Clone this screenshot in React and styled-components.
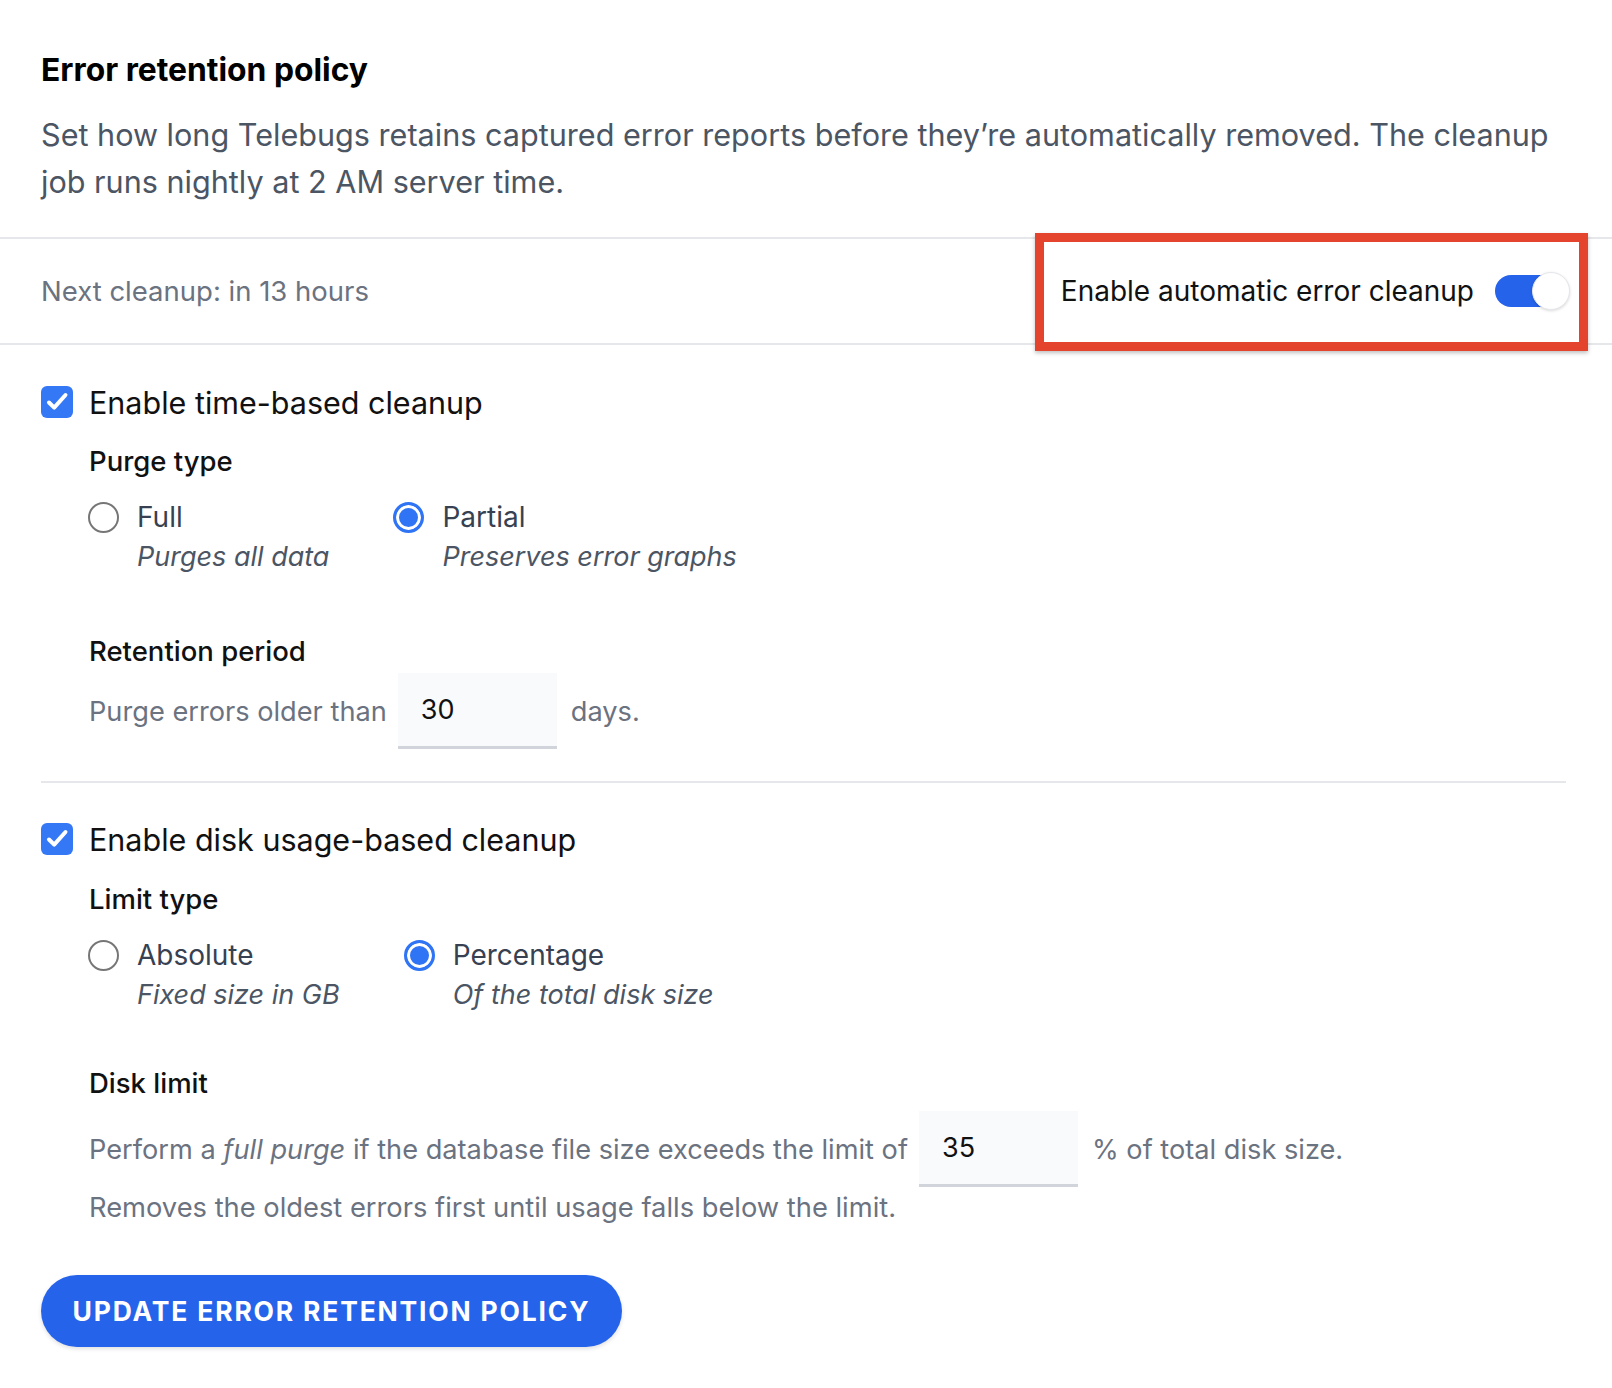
import React from 'react'
import styled, { createGlobalStyle } from 'styled-components'

const GlobalStyle = createGlobalStyle`
  body {
    margin: 0;
    background: #ffffff;
    font-family: Inter, "Noto Sans", "Liberation Sans", sans-serif;
    color: #111827;
  }
`

const Page = styled.div`
  width: 1612px;
  min-height: 1388px;
  box-sizing: border-box;
`

const Header = styled.header`
  padding: 50px 46px 32px 41px;
`

const Title = styled.h2`
  margin: 0;
  font-size: 31.8px;
  line-height: 40px;
  font-weight: 700;
  color: #000;
`

const Description = styled.p`
  margin: 21px 0 0;
  font-size: 30.6px;
  line-height: 47px;
  color: #4b5563;
`

const StatusBar = styled.div`
  height: 104px;
  border-top: 2px solid #e5e7eb;
  border-bottom: 2px solid #e5e7eb;
  padding: 0 47px 0 41px;
  display: flex;
  align-items: center;
  justify-content: space-between;
`

const NextCleanup = styled.span`
  font-size: 27.5px;
  color: #6b7280;
`

const ToggleGroup = styled.label`
  position: relative;
  display: flex;
  align-items: center;
  gap: 21px;
  font-size: 28px;
  color: #111;

  &::before {
    content: '';
    position: absolute;
    top: -41px;
    bottom: -43px;
    left: -26px;
    right: -23px;
    border: 9px solid #e4442e;
    box-shadow: 0 2px 4px rgba(0, 0, 0, 0.25);
    pointer-events: none;
  }
`

const Track = styled.span`
  position: relative;
  display: block;
  width: 70px;
  height: 32px;
  border-radius: 16px;
  background: ${p => (p.on ? '#2563eb' : '#d1d5db')};
`

const Knob = styled.span`
  position: absolute;
  top: -3px;
  ${p => (p.on ? 'right: -5px;' : 'left: -5px;')}
  width: 38px;
  height: 38px;
  border-radius: 50%;
  background: #fff;
  border: 1px solid #e5e7eb;
  box-sizing: border-box;
  box-shadow: 0 1px 3px rgba(0, 0, 0, 0.15);
`

const Body = styled.div`
  padding: 37px 46px 0 41px;
`

const CheckRow = styled.label`
  display: flex;
  align-items: center;
  gap: 16px;
  height: 40px;
  font-size: 30.5px;
  color: #111;
`

const CheckBox = styled.span`
  width: 32px;
  height: 32px;
  border-radius: 6px;
  background: #3578f6;
  display: flex;
  align-items: center;
  justify-content: center;
`

const Indent = styled.div`
  padding-left: 48px;
`

const FieldLabel = styled.div`
  margin-top: ${p => p.top}px;
  font-size: 27.5px;
  line-height: 36px;
  font-weight: 500;
  color: #111;
`

const RadioGroup = styled.div`
  display: flex;
  gap: 64px;
  margin-top: 20px;
  margin-left: -1px;
`

const RadioOption = styled.label`
  display: grid;
  grid-template-columns: 31px auto;
  column-gap: 18px;
  row-gap: 4px;
  align-items: center;
`

const RadioCircle = styled.span`
  width: 31px;
  height: 31px;
  box-sizing: border-box;
  border-radius: 50%;
  border: ${p => (p.checked ? '3px solid #2f74f5' : '2px solid #767676')};
  background: ${p => (p.checked ? '#2f74f5' : '#fff')};
  box-shadow: ${p => (p.checked ? 'inset 0 0 0 3px #fff' : 'none')};
`

const RadioText = styled.span`
  font-size: 28px;
  line-height: 36px;
  color: #374151;
`

const Hint = styled.span`
  grid-column: 2;
  font-size: 27px;
  line-height: 36px;
  font-style: italic;
  color: #4b5563;
`

const InputRow = styled.div`
  display: flex;
  align-items: center;
  margin-top: ${p => p.top}px;
  font-size: 27.2px;
  color: #6b7280;
`

const NumberInput = styled.input`
  width: 159px;
  height: 76px;
  box-sizing: border-box;
  margin: 0 14px 0 11px;
  padding: 0 0 0 23px;
  border: none;
  border-bottom: 3px solid #d1d5db;
  background: #f9fafb;
  font-family: inherit;
  font-size: 27px;
  color: #111;
  outline: none;
`

const Note = styled.p`
  margin: 3px 0 0;
  font-size: 27.3px;
  line-height: 36px;
  color: #6b7280;
`

const Divider = styled.hr`
  margin: 32px 0 36px;
  border: none;
  border-top: 2px solid #e5e7eb;
`

const SubmitButton = styled.button`
  margin-top: 49px;
  width: 581px;
  height: 72px;
  border: none;
  border-radius: 36px;
  background: #2563eb;
  color: #fff;
  font-family: inherit;
  font-size: 26.5px;
  font-weight: 700;
  letter-spacing: 1.8px;
  box-shadow: 0 2px 4px rgba(0, 0, 0, 0.12);
  cursor: pointer;
`

const Check = () => (
  <CheckBox>
    <svg width="24" height="24" viewBox="0 0 24 24" fill="none">
      <path d="M4 12.5l5.2 5.2L20.5 5" stroke="#fff" strokeWidth="4" strokeLinecap="round" strokeLinejoin="round" />
    </svg>
  </CheckBox>
)

const Radio = ({ checked, label, hint }) => (
  <RadioOption>
    <RadioCircle checked={checked} />
    <RadioText>{label}</RadioText>
    <Hint>{hint}</Hint>
  </RadioOption>
)

const App = () => {
  return (
    <Page>
      <GlobalStyle />
      <Header>
        <Title>Error retention policy</Title>
        <Description>
          Set how long Telebugs retains captured error reports before they’re automatically removed. The cleanup job runs nightly at 2 AM server time.
        </Description>
      </Header>

      <StatusBar>
        <NextCleanup>Next cleanup: in 13 hours</NextCleanup>
        <ToggleGroup>
          Enable automatic error cleanup
          <Track on>
            <Knob on />
          </Track>
        </ToggleGroup>
      </StatusBar>

      <Body>
        <CheckRow>
          <Check />
          Enable time-based cleanup
        </CheckRow>
        <Indent>
          <FieldLabel top={21}>Purge type</FieldLabel>
          <RadioGroup>
            <Radio label="Full" hint="Purges all data" />
            <Radio checked label="Partial" hint="Preserves error graphs" />
          </RadioGroup>
          <FieldLabel top={58}>Retention period</FieldLabel>
          <InputRow top={4}>
            Purge errors older than
            <NumberInput defaultValue="30" />
            days.
          </InputRow>
        </Indent>

        <Divider />

        <CheckRow>
          <Check />
          Enable disk usage-based cleanup
        </CheckRow>
        <Indent>
          <FieldLabel top={22}>Limit type</FieldLabel>
          <RadioGroup>
            <Radio label="Absolute" hint="Fixed size in GB" />
            <Radio checked label="Percentage" hint="Of the total disk size" />
          </RadioGroup>
          <FieldLabel top={52}>Disk limit</FieldLabel>
          <InputRow top={10}>
            <span>Perform a <i>full purge</i> if the database file size exceeds the limit of</span>
            <NumberInput defaultValue="35" />
            % of total disk size.
          </InputRow>
          <Note>Removes the oldest errors first until usage falls below the limit.</Note>
        </Indent>

        <SubmitButton>UPDATE ERROR RETENTION POLICY</SubmitButton>
      </Body>
    </Page>
  )
}

export default App
